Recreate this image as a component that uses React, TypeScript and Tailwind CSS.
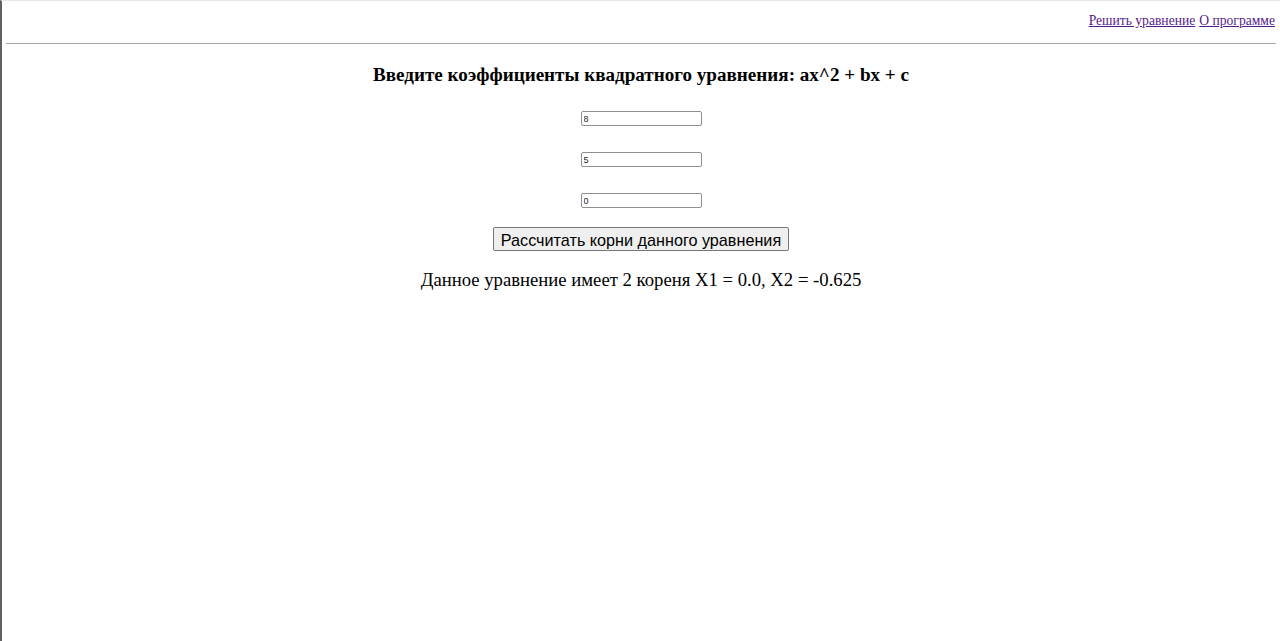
import React from "react";

export default function App() {
  return (
    <div className="min-h-[641px] w-full bg-white border-l-2 border-l-[#5f5f66] border-t border-t-[#e6e6e6] font-['Liberation_Serif',serif] text-black">
      <nav className="flex justify-end gap-[4px] pr-[5px] pt-[10px] h-[42px] text-[13.6px]">
        <a href="#" className="text-[#551a8b] underline">
          Решить уравнение
        </a>
        <a href="#" className="text-[#551a8b] underline">
          О программе
        </a>
      </nav>
      <div className="mx-[4px] h-px bg-[#a9a9a9]" />
      <main className="flex flex-col items-center">
        <h3 className="mt-[20px] text-[19.1px] font-bold leading-[22px]">
          Введите коэффициенты квадратного уравнения: ax^2 + bx + c
        </h3>
        <div className="mt-[25px] flex flex-col gap-[26px]">
          {["8", "5", "0"].map((v, i) => (
            <input
              key={i}
              defaultValue={v}
              className="w-[121px] h-[15px] border border-[#8f8f8f] rounded-[2px] px-[2px] text-[9px] text-[#222] font-['Liberation_Sans',sans-serif] outline-none"
            />
          ))}
        </div>
        <button className="mt-[19px] h-[24px] px-[7px] border border-[#767676] rounded-[2px] bg-[#efefef] text-[16.2px] font-['Liberation_Sans',sans-serif] text-black">
          Рассчитать корни данного уравнения
        </button>
        <p className="mt-[18px] text-[18.7px] leading-[22px]">
          Данное уравнение имеет 2 кореня X1 = 0.0, X2 = -0.625
        </p>
      </main>
    </div>
  );
}
